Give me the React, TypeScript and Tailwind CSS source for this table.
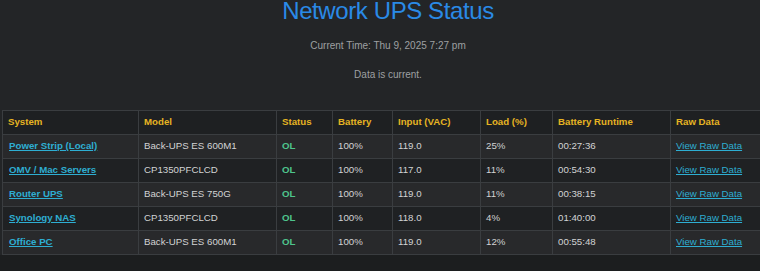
import React from "react";

type Row = {
  system: string;
  model: string;
  status: string;
  battery: string;
  input: string;
  load: string;
  runtime: string;
};

const rows: Row[] = [
  { system: "Power Strip (Local)", model: "Back-UPS ES 600M1", status: "OL", battery: "100%", input: "119.0", load: "25%", runtime: "00:27:36" },
  { system: "OMV / Mac Servers", model: "CP1350PFCLCD", status: "OL", battery: "100%", input: "117.0", load: "11%", runtime: "00:54:30" },
  { system: "Router UPS", model: "Back-UPS ES 750G", status: "OL", battery: "100%", input: "119.0", load: "11%", runtime: "00:38:15" },
  { system: "Synology NAS", model: "CP1350PFCLCD", status: "OL", battery: "100%", input: "118.0", load: "4%", runtime: "01:40:00" },
  { system: "Office PC", model: "Back-UPS ES 600M1", status: "OL", battery: "100%", input: "119.0", load: "12%", runtime: "00:55:48" },
];

const headers = ["System", "Model", "Status", "Battery", "Input (VAC)", "Load (%)", "Battery Runtime", "Raw Data"];
const widths = [136, 138, 56, 60, 88, 72, 118, 122];

export default function App() {
  return (
    <div
      className="min-h-screen w-[760px] overflow-hidden bg-[#1c1e1f]"
      style={{ fontFamily: '"Liberation Sans", Arial, sans-serif' }}
    >
      <div className="flex w-[774px] flex-col items-center bg-[#232527] pl-[2px]">
        <h1 className="mt-0 text-[24px] leading-[22px] font-normal tracking-[-0.4px] text-[#2a8ae6]">
          Network UPS Status
        </h1>
        <p className="mt-[18px] text-[10px] leading-[12px] text-[#9ea0a2]">Current Time: Thu 9, 2025 7:27 pm</p>
        <p className="mt-[17px] text-[10px] leading-[12px] text-[#9ea0a2]">Data is current.</p>
        <table className="mt-[29px] self-start table-fixed border-collapse border border-[#3a3d40] text-[9.7px] w-[790px]">
          <colgroup>
            {widths.map((w, i) => (
              <col key={i} style={{ width: w }} />
            ))}
          </colgroup>
          <thead>
            <tr className="h-[24px] bg-[#1e2022]">
              {headers.map((h) => (
                <th
                  key={h}
                  className="border border-[#3a3d40] px-[5px] py-0 text-left font-bold text-[#e6b422]"
                >
                  {h}
                </th>
              ))}
            </tr>
          </thead>
          <tbody>
            {rows.map((r, i) => (
              <tr key={r.system} className={`h-[24px] ${i % 2 === 0 ? "bg-[#28292b]" : "bg-[#1f2123]"}`}>
                <td className="border border-[#3a3d40] px-[5px] py-0 pl-[6px]">
                  <a href="#" className="font-bold text-[#2eaed2] underline">
                    {r.system}
                  </a>
                </td>
                <td className="border border-[#3a3d40] px-[5px] py-0 text-[#d2d3d4]">{r.model}</td>
                <td className="border border-[#3a3d40] px-[5px] py-0 font-bold text-[#4ec48c]">{r.status}</td>
                <td className="border border-[#3a3d40] px-[5px] py-0 text-[#d2d3d4]">{r.battery}</td>
                <td className="border border-[#3a3d40] px-[5px] py-0 text-[#d2d3d4]">{r.input}</td>
                <td className="border border-[#3a3d40] px-[5px] py-0 text-[#d2d3d4]">{r.load}</td>
                <td className="border border-[#3a3d40] px-[5px] py-0 text-[#d2d3d4]">{r.runtime}</td>
                <td className="border border-[#3a3d40] px-[5px] py-0">
                  <a href="#" className="text-[#2eaed2] underline">
                    View Raw Data
                  </a>
                </td>
              </tr>
            ))}
          </tbody>
        </table>
      </div>
    </div>
  );
}
